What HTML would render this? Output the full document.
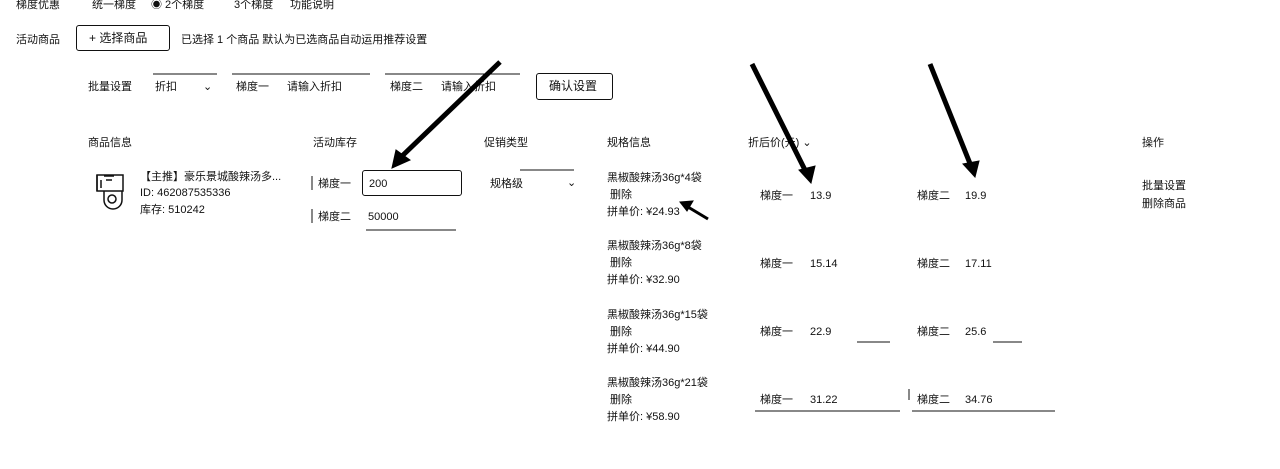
<!DOCTYPE html>
<html><head><meta charset="utf-8"><style>
body{margin:0;width:1280px;height:469px;background:#fff;position:relative;overflow:hidden;font-family:"Liberation Sans","Noto Sans CJK SC",sans-serif;font-size:11px;color:#111}
.t{position:absolute;white-space:nowrap;line-height:14px}
.box{position:absolute;border:1.5px solid #111;border-radius:3px;box-sizing:border-box}
</style></head><body>
<div class="t" style="left:16px;top:-2px">梯度优惠</div>
<div class="t" style="left:92px;top:-2px">统一梯度</div>
<div class="t" style="left:151px;top:-2px">◉ 2个梯度</div>
<div class="t" style="left:234px;top:-2px">3个梯度</div>
<div class="t" style="left:290px;top:-2px">功能说明</div>

<div class="t" style="left:16px;top:33px">活动商品</div>
<div class="box" style="left:76px;top:25px;width:94px;height:26px"></div>
<div class="t" style="left:89px;top:31px;font-size:12px">+ 选择商品</div>
<div class="t" style="left:181px;top:33px">已选择 1 个商品 默认为已选商品自动运用推荐设置</div>

<div class="t" style="left:88px;top:80px">批量设置</div>
<div class="t" style="left:155px;top:80px">折扣</div>
<div class="t" style="left:203px;top:80px">⌄</div>
<div class="t" style="left:236px;top:80px">梯度一</div>
<div class="t" style="left:287px;top:80px">请输入折扣</div>
<div class="t" style="left:390px;top:80px">梯度二</div>
<div class="t" style="left:441px;top:80px">请输入折扣</div>
<div class="box" style="left:536px;top:73px;width:77px;height:27px"></div>
<div class="t" style="left:549px;top:79px;font-size:12px">确认设置</div>

<div class="t" style="left:88px;top:136px">商品信息</div>
<div class="t" style="left:313px;top:136px">活动库存</div>
<div class="t" style="left:484px;top:136px">促销类型</div>
<div class="t" style="left:607px;top:136px">规格信息</div>
<div class="t" style="left:748px;top:136px">折后价(元) ⌄</div>
<div class="t" style="left:1142px;top:136px">操作</div>

<svg style="position:absolute;left:0;top:0" width="1280" height="469">
<g fill="none" stroke="#111" stroke-width="1.5">
<rect x="97" y="175" width="26" height="16"/><path d="M97 175v16M104 176h10M106 180h6M101 180v8"/>
<path d="M104 191v9c0 5 4 9 9 9s9-4 9-9v-9"/><circle cx="112" cy="199" r="4"/>
</g>
<g fill="none" stroke="#111" stroke-width="1">
<line x1="153" y1="74" x2="217" y2="74"/><line x1="232" y1="74" x2="370" y2="74"/><line x1="385" y1="74" x2="520" y2="74"/>
<line x1="366" y1="230" x2="456" y2="230"/>
<line x1="755" y1="411" x2="900" y2="411"/><line x1="912" y1="411" x2="1055" y2="411"/>
<line x1="857" y1="342" x2="890" y2="342"/><line x1="993" y1="342" x2="1022" y2="342"/>
<line x1="909" y1="389" x2="909" y2="400"/><line x1="312" y1="176" x2="312" y2="190"/><line x1="312" y1="209" x2="312" y2="223"/>
<line x1="520" y1="170" x2="574" y2="170"/>
</g>
<g stroke="#000" fill="#000">
<line x1="500" y1="62" x2="400" y2="158" stroke-width="5"/><polygon points="392,168 396,150 410,160"/>
<line x1="752" y1="64" x2="806" y2="172" stroke-width="5"/><polygon points="811,183 799,170 815,166"/>
<line x1="930" y1="64" x2="971" y2="166" stroke-width="5"/><polygon points="975,177 963,164 979,161"/>
<line x1="708" y1="219" x2="688" y2="207" stroke-width="3"/><polygon points="680,202 693,201 687,211"/>
</g>
</svg>
<div class="t" style="left:140px;top:170px">【主推】豪乐景城酸辣汤多...</div>
<div class="t" style="left:140px;top:186px">ID: 462087535336</div>
<div class="t" style="left:140px;top:203px">库存: 510242</div>

<div class="t" style="left:318px;top:177px">梯度一</div>
<div class="box" style="left:362px;top:170px;width:100px;height:26px;border-width:1.2px"></div>
<div class="t" style="left:369px;top:177px">200</div>
<div class="t" style="left:318px;top:210px">梯度二</div>
<div class="t" style="left:368px;top:210px">50000</div>
<div class="t" style="left:490px;top:177px">规格级</div>
<div class="t" style="left:567px;top:176px">⌄</div>

<div class="t" style="left:607px;top:171px">黑椒酸辣汤36g*4袋</div>
<div class="t" style="left:610px;top:188px">删除</div>
<div class="t" style="left:607px;top:205px">拼单价: ¥24.93</div>
<div class="t" style="left:760px;top:189px">梯度一</div><div class="t" style="left:810px;top:189px">13.9</div>
<div class="t" style="left:917px;top:189px">梯度二</div><div class="t" style="left:965px;top:189px">19.9</div>
<div class="t" style="left:1142px;top:179px">批量设置</div>
<div class="t" style="left:1142px;top:197px">删除商品</div>

<div class="t" style="left:607px;top:239px">黑椒酸辣汤36g*8袋</div>
<div class="t" style="left:610px;top:256px">删除</div>
<div class="t" style="left:607px;top:273px">拼单价: ¥32.90</div>
<div class="t" style="left:760px;top:257px">梯度一</div><div class="t" style="left:810px;top:257px">15.14</div>
<div class="t" style="left:917px;top:257px">梯度二</div><div class="t" style="left:965px;top:257px">17.11</div>

<div class="t" style="left:607px;top:308px">黑椒酸辣汤36g*15袋</div>
<div class="t" style="left:610px;top:325px">删除</div>
<div class="t" style="left:607px;top:342px">拼单价: ¥44.90</div>
<div class="t" style="left:760px;top:325px">梯度一</div><div class="t" style="left:810px;top:325px">22.9</div>
<div class="t" style="left:917px;top:325px">梯度二</div><div class="t" style="left:965px;top:325px">25.6</div>

<div class="t" style="left:607px;top:376px">黑椒酸辣汤36g*21袋</div>
<div class="t" style="left:610px;top:393px">删除</div>
<div class="t" style="left:607px;top:410px">拼单价: ¥58.90</div>
<div class="t" style="left:760px;top:393px">梯度一</div><div class="t" style="left:810px;top:393px">31.22</div>
<div class="t" style="left:917px;top:393px">梯度二</div><div class="t" style="left:965px;top:393px">34.76</div>
</body></html>
